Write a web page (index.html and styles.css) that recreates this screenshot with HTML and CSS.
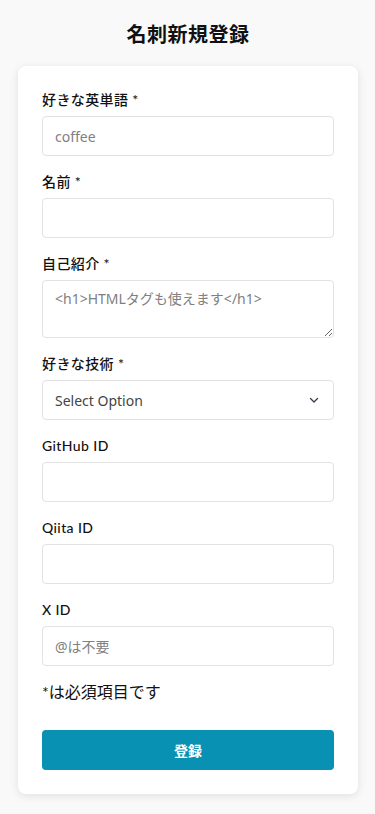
FILE: index.html
```html
<!DOCTYPE html>
<html lang="ja">
  <head>
    <meta charset="utf-8">
    <meta name="viewport" content="width=device-width, initial-scale=1">
    <title>名刺新規登録</title>
    <link rel="stylesheet" href="styles.css">
  </head>
  <body>
    <main class="page">
      <h1 class="title">名刺新規登録</h1>
      <form class="card">
        <div class="field">
          <label for="word">好きな英単語 *</label>
          <input id="word" type="text" placeholder="coffee">
        </div>
        <div class="field">
          <label for="name">名前 *</label>
          <input id="name" type="text">
        </div>
        <div class="field">
          <label for="desc">自己紹介 *</label>
          <textarea id="desc" placeholder="<h1>HTMLタグも使えます</h1>"></textarea>
        </div>
        <div class="field">
          <label for="skill">好きな技術 *</label>
          <div class="select">
            <select id="skill">
              <option>Select Option</option>
            </select>
            <svg class="chevron" width="12" height="12" viewBox="0 0 12 12"><path d="M2.5 4.5 6 8l3.5-3.5" fill="none" stroke="#374151" stroke-width="1.4" stroke-linecap="round" stroke-linejoin="round"/></svg>
          </div>
        </div>
        <div class="field">
          <label for="github">GitHub ID</label>
          <input id="github" type="text">
        </div>
        <div class="field">
          <label for="qiita">Qiita ID</label>
          <input id="qiita" type="text">
        </div>
        <div class="field">
          <label for="x">X ID</label>
          <input id="x" type="text" placeholder="@は不要">
        </div>
        <p class="note">*は必須項目です</p>
        <button class="submit" type="button">登録</button>
      </form>
    </main>
  </body>
</html>
```

FILE: styles.css
```css
* {
  box-sizing: border-box;
  font-family: "Noto Sans", "Noto Sans CJK JP", sans-serif;
}
body {
  margin: 0;
  background-color: #f9f9f9;
  color: #111;
}
.page { padding: 21px 17px 20px 18px; }
.title {
  margin: 0 0 17px;
  font-size: 20px;
  line-height: 28px;
  font-weight: 700;
  text-align: center;
  letter-spacing: .5px;
}
.card {
  background-color: #fff;
  border-radius: 8px;
  box-shadow: 0 2px 8px rgba(0, 0, 0, .1);
  padding: 24px;
}
.field { margin-bottom: 16px; }
.field label {
  display: block;
  font-family: "Lato", "Noto Sans CJK JP", sans-serif;
  font-size: 14px;
  line-height: 20px;
  font-weight: 500;
  margin-bottom: 6px;
  letter-spacing: .4px;
}
input, textarea, select {
  display: block;
  width: 100%;
  height: 40px;
  border: 1px solid #e2e2e2;
  border-radius: 4px;
  background-color: #fff;
  padding: 0 12px;
  font-size: 14px;
  color: #333;
  outline: none;
}
textarea {
  height: 58px;
  padding: 8px 12px;
  line-height: 20px;
}
::placeholder { color: #808080; }
.select { position: relative; }
select {
  appearance: none;
  color: #444;
}
.chevron {
  position: absolute;
  right: 14px;
  top: 14px;
  pointer-events: none;
}
.note {
  margin: 16px 0 28px;
  font-family: "Lato", "Noto Sans CJK JP", sans-serif;
  font-size: 16px;
  line-height: 20px;
}
.submit {
  display: block;
  width: 100%;
  height: 40px;
  border: 0;
  border-radius: 4px;
  background-color: #0891b2;
  color: #fff;
  font-size: 14px;
  font-weight: 700;
}
```
